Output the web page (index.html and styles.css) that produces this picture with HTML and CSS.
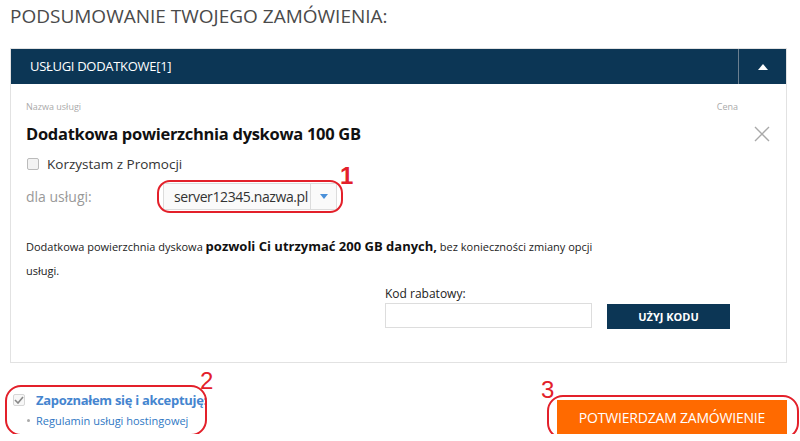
FILE: index.html
```html
<!DOCTYPE html>
<html lang="pl">
  <head>
    <meta charset="UTF-8" />
    <meta name="viewport" content="width=device-width, initial-scale=1.0" />
    <title>Podsumowanie zamówienia</title>
    <link rel="stylesheet" href="styles.css">
  </head>
  <body>
    <div class="page">
      <h1 class="title">PODSUMOWANIE TWOJEGO ZAMÓWIENIA:</h1>

      <div class="panel">
        <div class="panel-head">
          <span class="panel-title">USŁUGI DODATKOWE[1]</span>
          <span class="toggle">
            <svg width="10" height="6" viewBox="0 0 10 6"><path d="M0 6 L5 0 L10 6 Z" fill="#fff" /></svg>
          </span>
        </div>

        <div class="panel-body">
          <div class="cols-head">
            <span>Nazwa usługi</span>
            <span>Cena</span>
          </div>

          <div class="service-row">
            <h2 class="service-name">Dodatkowa powierzchnia dyskowa 100 GB</h2>
            <svg class="remove" width="16" height="16" viewBox="0 0 16 16">
              <path d="M1 1 L15 15 M15 1 L1 15" stroke="#a9a9a9" stroke-width="1.4" fill="none" />
            </svg>
          </div>

          <label class="promo"><span class="box"></span>Korzystam z Promocji</label>

          <div class="for-service">
            <span class="for-label">dla usługi:</span>
            <div class="select-wrap">
              <div class="select">
                <span class="select-value">server12345.nazwa.pl</span>
                <span class="select-btn">
                  <svg width="8" height="5" viewBox="0 0 8 5"><path d="M0 0 L8 0 L4 5 Z" fill="#4a90d9" /></svg>
                </span>
              </div>
              <span class="ring ring-1"></span>
              <span class="num num-1">1</span>
            </div>
          </div>

          <p class="desc">
            Dodatkowa powierzchnia dyskowa <b>pozwoli Ci utrzymać 200 GB danych,</b> bez konieczności zmiany opcji<br />usługi.
          </p>

          <div class="coupon">
            <div class="coupon-field">
              <label for="code">Kod rabatowy:</label>
              <input type="text" id="code" />
            </div>
            <button class="btn-code">UŻYJ KODU</button>
          </div>
        </div>
      </div>

      <div class="footer">
        <div class="accept">
          <div class="accept-row">
            <span class="box checked">
              <svg width="10" height="8" viewBox="0 0 10 8"><path d="M1 4 L4 7 L9 1" stroke="#888" stroke-width="1.6" fill="none" /></svg>
            </span>
            <span class="accept-text">Zapoznałem się i akceptuję:</span>
          </div>
          <div class="rules"><span class="dot"></span><a href="#">Regulamin usługi hostingowej</a></div>
          <span class="ring ring-2"></span>
          <span class="num num-2">2</span>
        </div>

        <div class="confirm">
          <button class="btn-confirm">POTWIERDZAM ZAMÓWIENIE</button>
          <span class="ring ring-3"></span>
          <span class="num num-3">3</span>
        </div>
      </div>
    </div>
  </body>
</html>
```

FILE: styles.css
```css
* {
  box-sizing: border-box;
}

body {
  margin: 0;
  font-family: "Open Sans", "DejaVu Sans", sans-serif;
  color: #222;
  background: #fff;
}

.page {
  padding: 0 13px 0 10px;
}

.title {
  margin: 0;
  padding-top: 3px;
  height: 48px;
  font-size: 19px;
  font-weight: 400;
  color: #4a4a4a;
}

.panel {
  border: 1px solid #e2e2e2;
  border-top: 0;
}

.panel-head {
  display: flex;
  justify-content: space-between;
  height: 36px;
  background: #0c3655;
  border-top: 1px solid #e2e2e2;
}

.panel-title {
  padding-left: 19px;
  line-height: 35px;
  font-size: 13px;
  color: #fff;
  letter-spacing: -0.3px;
}

.toggle {
  width: 48px;
  border-left: 1px solid #6b7f90;
  display: flex;
  align-items: center;
  justify-content: center;
}

.panel-body {
  padding: 16px 16px 34px 15px;
}

.cols-head {
  display: flex;
  justify-content: space-between;
  padding-right: 32px;
  font-size: 9px;
  color: #aaa;
}

.service-row {
  display: flex;
  justify-content: space-between;
  align-items: center;
  margin-top: 9px;
}

.service-name {
  margin: 0;
  font-size: 16.5px;
  font-weight: 700;
  color: #111;
  letter-spacing: -0.3px;
}

.promo {
  display: flex;
  align-items: center;
  margin-top: 10px;
  font-size: 13.5px;
  color: #333;
}

.box {
  width: 12px;
  height: 12px;
  border: 1px solid #bbb;
  border-radius: 2px;
  background: #f3f3f3;
  margin: 0 8px 0 1px;
  display: inline-flex;
  align-items: center;
  justify-content: center;
}

.for-service {
  display: flex;
  align-items: center;
  margin-top: 10px;
}

.for-label {
  width: 137px;
  font-size: 14px;
  color: #999;
}

.select-wrap {
  position: relative;
}

.select {
  display: flex;
  width: 174px;
  height: 27px;
  border: 1px solid #dcdcdc;
  background: #fafafa;
}

.select-value {
  flex: 1;
  padding-left: 10px;
  line-height: 25px;
  font-size: 14px;
  color: #333;
  letter-spacing: -0.4px;
}

.select-btn {
  width: 26px;
  border-left: 1px solid #dcdcdc;
  display: flex;
  align-items: center;
  justify-content: center;
}

.ring {
  position: absolute;
  border: 2px solid #e3202a;
  border-radius: 13px;
  pointer-events: none;
}

.ring-1 {
  left: -6px;
  top: -3px;
  width: 186px;
  height: 33px;
}

.num {
  position: absolute;
  color: #e3202a;
  font-family: "Liberation Sans", sans-serif;
  font-size: 24px;
  line-height: 1;
}

.num-1 {
  left: 177px;
  top: -19px;
  font-weight: 700;
}

.desc {
  margin: 24px 0 0;
  font-size: 11px;
  line-height: 24px;
  color: #222;
}

.desc b {
  font-size: 13px;
  color: #111;
}

.coupon {
  display: flex;
  align-items: flex-end;
  gap: 15px;
  margin: 2px 0 0 359px;
}

.coupon-field {
  display: flex;
  flex-direction: column;
}

.coupon-field label {
  font-size: 12px;
  color: #222;
  margin-bottom: 1px;
}

.coupon-field input {
  width: 207px;
  height: 25px;
  border: 1px solid #ddd;
  margin: 0;
}

.btn-code {
  width: 123px;
  height: 25px;
  border: 0;
  background: #0c3655;
  color: #fff;
  font-family: inherit;
  font-size: 11px;
  font-weight: 700;
  margin-bottom: -1px;
}

.footer {
  display: flex;
  justify-content: space-between;
  align-items: flex-start;
  padding-top: 28px;
}

.accept {
  position: relative;
  padding-left: 2px;
}

.accept-row {
  display: flex;
  align-items: center;
}

.checked {
  border-color: #d6d6d6;
  background: #f7f7f7;
  margin-right: 11px;
}

.accept-text {
  font-size: 13px;
  font-weight: 700;
  color: #4585cf;
  letter-spacing: -0.3px;
}

.rules {
  display: flex;
  align-items: center;
  margin-top: 4px;
  font-size: 11px;
  padding-left: 15px;
}

.dot {
  width: 3px;
  height: 3px;
  border-radius: 50%;
  background: #aaa;
  margin-right: 6px;
}

.rules a {
  color: #2f78c4;
  text-decoration: none;
}

.ring-2 {
  left: -5px;
  top: -6px;
  width: 202px;
  height: 51px;
  border-radius: 16px;
}

.num-2 {
  left: 190px;
  top: -22px;
}

.confirm {
  position: relative;
  margin-top: 9px;
}

.btn-confirm {
  width: 230px;
  height: 34px;
  border: 0;
  background: #ff6a00;
  color: #fff;
  font-family: inherit;
  font-size: 14px;
  letter-spacing: -0.2px;
}

.ring-3 {
  left: -10px;
  top: -5px;
  width: 252px;
  height: 44px;
  border-radius: 16px;
}

.num-3 {
  left: -16px;
  top: -22px;
}
```
